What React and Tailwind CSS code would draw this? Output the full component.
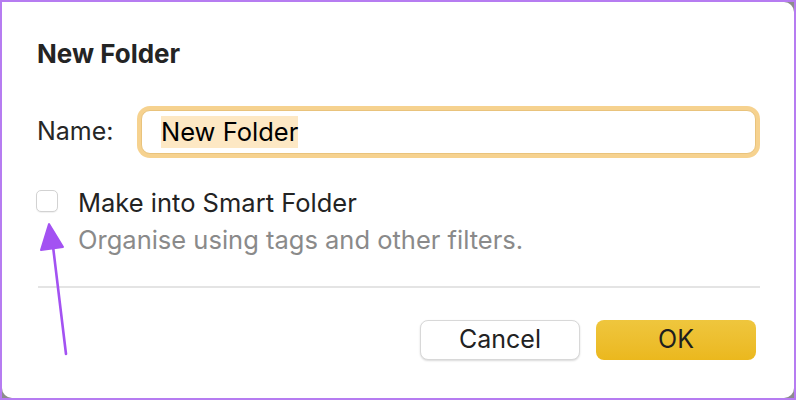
import React from 'react';

const font = { fontFamily: 'Inter, "Noto Sans", sans-serif' };

function PointerArrow() {
  // hand-drawn annotation arrow pointing at the checkbox
  return (
    <svg className="absolute left-0 top-0 pointer-events-none" width="796" height="400">
      <path d="M64 352 L50 236" stroke="#a352f2" strokeWidth="2.6" strokeLinecap="round" fill="none" />
      <path d="M47 222 L39 248 L61 245 Z" fill="#a352f2" stroke="#a352f2" strokeWidth="2" strokeLinejoin="round" />
    </svg>
  );
}

export default function App() {
  return (
    <div className="w-[796px] h-[400px] bg-[#8c8c8c]" style={font}>
      <div className="relative w-full h-full border-2 border-[#b67cf1] bg-[#8c8c8c] overflow-hidden">
        <div className="w-full h-full bg-white rounded-tr-[10px] rounded-br-[10px] rounded-bl-[10px] flex flex-col pl-[35px] pr-[34px] pt-[37px]">
          <h1 className="text-[26px] leading-[30px] font-bold text-[#242424]">New Folder</h1>

          <div className="flex items-center mt-[37px] h-[52px]">
            <span className="text-[25px] text-[#262626] w-[100px]">Name:</span>
            <div className="flex-1 h-[52px] rounded-[13px] bg-[#f6d28f] p-[4px]">
              <div className="w-full h-full rounded-[9px] bg-white border border-[#e9c37c] flex items-center pl-[19px]">
                <span className="bg-[#fde8c4] text-[25.5px] leading-[32px] text-black">New Folder</span>
              </div>
            </div>
          </div>

          <div className="flex items-start mt-[30px]">
            <div className="w-[22px] h-[22px] rounded-[5px] border border-[#d2d2d2] bg-white shadow-[0_1px_1px_rgba(0,0,0,0.06)] mt-[2px] -ml-[1px] shrink-0" />
            <div className="ml-[20px] flex flex-col">
              <span className="text-[25.5px] leading-[30px] text-[#232323]">Make into Smart Folder</span>
              <span className="text-[25.5px] leading-[30px] text-[#8a8a8a] mt-[7px]">Organise using tags and other filters.</span>
            </div>
          </div>

          <div className="h-[2px] bg-[#e4e4e4] mt-[31px] ml-[1px]" />

          <div className="flex justify-end gap-4 mt-[32px] pr-[4px]">
            <button className="w-[160px] h-[40px] rounded-[8px] bg-white border border-[#d8d8d8] shadow-[0_1px_2px_rgba(0,0,0,0.15)] text-[25px] text-[#222]">
              Cancel
            </button>
            <button className="w-[160px] h-[40px] rounded-[8px] bg-gradient-to-b from-[#efc63d] to-[#ebb81d] text-[25px] text-[#1e1e1e]">
              OK
            </button>
          </div>
        </div>
        <PointerArrow />
      </div>
    </div>
  );
}
